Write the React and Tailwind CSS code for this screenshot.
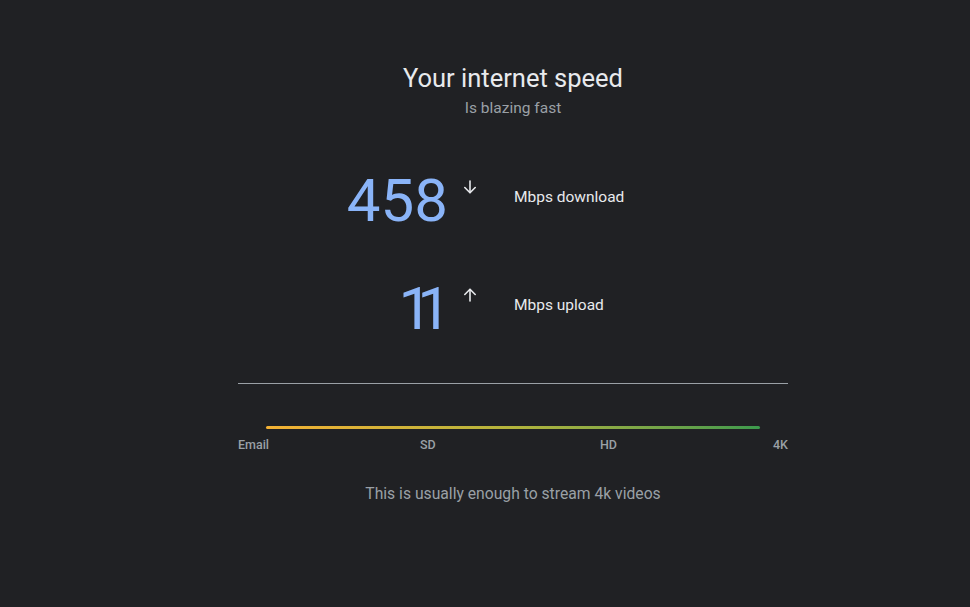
import React from 'react'

const Arrow = ({ up }) => (
  <svg width="16" height="16" viewBox="0 0 16 16" fill="none" stroke="#e8eaed" strokeWidth="1.6" strokeLinecap="round" strokeLinejoin="round">
    {up ? (
      <>
        <path d="M8 14V2.5" />
        <path d="M2.8 7.5L8 2.3l5.2 5.2" />
      </>
    ) : (
      <>
        <path d="M8 2v11.5" />
        <path d="M2.8 8.5L8 13.7l5.2-5.2" />
      </>
    )}
  </svg>
)

const SpeedRow = ({ value, label, up, tight }) => (
  <div className="flex items-center">
    <div className="w-[210px] text-right text-[60px] leading-none text-[#8ab4f8]">
      {tight ? <span className="mr-[12px] tracking-[-15px]">{value}</span> : value}
    </div>
    <div className="mt-[8px] w-[66px] self-start pl-[14px]">
      <Arrow up={up} />
    </div>
    <div className="mb-[6px] text-[15.5px] text-[#e8eaed]">{label}</div>
  </div>
)

export default function App() {
  return (
    <div className="min-h-[607px] w-full bg-[#202124] font-['Roboto',sans-serif]">
      <div className="ml-[238px] w-[550px] pt-[62px]">
        <div className="text-center">
          <h1 className="text-[25.5px] leading-[32px] text-[#e8eaed]">Your internet speed</h1>
          <p className="mt-[4px] text-[15.5px] leading-[20px] text-[#9aa0a6]">Is blazing fast</p>
        </div>

        <div className="mt-[53px] flex flex-col gap-[48px]">
          <SpeedRow value="458" label="Mbps download" />
          <SpeedRow value="11" label="Mbps upload" up tight />
        </div>

        <div className="mt-[44px] h-px bg-[#9aa0a6]" />

        <div className="mt-[42px] px-[28px]">
          <div className="h-[3px] rounded-full bg-gradient-to-r from-[#f4b134] via-[#b3b43c] to-[#3b9a4d]" />
        </div>
        <div className="relative mt-[7px] h-[16px] text-[12.5px] font-medium text-[#9aa0a6]">
          <span className="absolute left-0">Email</span>
          <span className="absolute left-[182px]">SD</span>
          <span className="absolute left-[362px]">HD</span>
          <span className="absolute right-0">4K</span>
        </div>

        <p className="mt-[30px] text-center text-[15.7px] text-[#9aa0a6]">This is usually enough to stream 4k videos</p>
      </div>
    </div>
  )
}
